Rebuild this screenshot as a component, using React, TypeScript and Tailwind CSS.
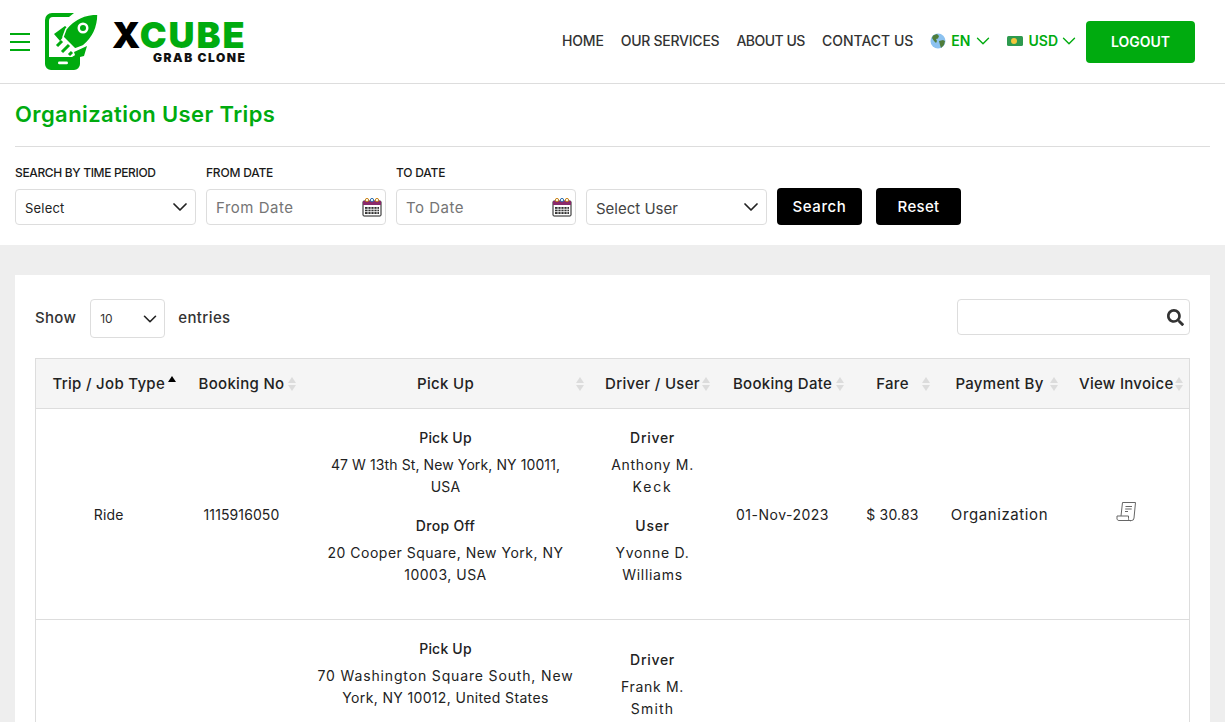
import { ChevronDown } from 'lucide-react';
import { FaSearch } from 'react-icons/fa';

const green = 'text-[#00ab0f]';

function Logo() {
  return (
    <svg width="54" height="57" viewBox="0 0 54 57" className="shrink-0">
      <path d="M7 0h22l-5 4H8a4 4 0 0 0-4 4v36h23l8-5v12a6 6 0 0 1-6 6H6a6 6 0 0 1-6-6V7a7 7 0 0 1 7-7z" fill="#00ab0f" />
      <rect x="13" y="48.500" width="10" height="2.800" rx="1.400" fill="#fff" />
      <path d="M9 21l11-8 4 3-9 12zM29 39l13-6-3 10-8 2z" fill="#00ab0f" />
      <path d="M53 1C39 1 29 6 21 16l-3 8 12 12 8-3C48 25 53 15 53 1z" fill="#00ab0f" stroke="#fff" strokeWidth="1.500" />
      <circle cx="38" cy="15" r="5.500" fill="#fff" />
      <circle cx="38" cy="15" r="3" fill="#00ab0f" />
      <path d="M12 33l5-5M17 39l7-7M24 42l3-3" stroke="#00ab0f" strokeWidth="3" />
    </svg>
  );
}

function Calendar() {
  return (
    <svg width="20" height="20" viewBox="0 0 20 20" className="shrink-0">
      <rect x="1" y="4" width="18" height="15" rx="1" fill="#fff" stroke="#1a1a1a" />
      <path d="M1 4h18v4H1z" fill="#8a2a6a" />
      <path d="M3 10h14v7H3z" fill="#333" />
      <path d="M3 12.300h14M3 14.600h14M6 10v7M9 10v7M12 10v7M15 10v7" stroke="#fff" strokeWidth="0.800" />
      <circle cx="5" cy="3" r="1.600" fill="#fff" stroke="#c8841a" />
      <circle cx="10" cy="3" r="1.600" fill="#fff" stroke="#2a6fb0" />
      <circle cx="15" cy="3" r="1.600" fill="#fff" stroke="#c8841a" />
    </svg>
  );
}

function Globe() {
  return (
    <svg width="16" height="16" viewBox="0 0 16 16" className="shrink-0">
      <circle cx="8" cy="8" r="7.500" fill="#8cc2f0" />
      <path d="M3 2.500l4-1.500 2 2-1 2.500-2 .5 1 2-1 2-2-2-2-3zM9 8l4-1 2 1-1 4-3 3-1-3z" fill="#4f7d3a" />
    </svg>
  );
}

function Money() {
  return (
    <svg width="16" height="10" viewBox="0 0 16 10" className="shrink-0">
      <rect width="16" height="10" rx="1.500" fill="#2e9a4f" />
      <circle cx="7" cy="5" r="3" fill="#f3c63c" />
    </svg>
  );
}

function Invoice() {
  return (
    <svg width="21" height="21" viewBox="0 0 21 21" fill="none" stroke="#666" strokeWidth="1">
      <path d="M5 15L6.500 1.500h13L18 17a2.500 2.500 0 0 1-2.500 2.500H3a2 2 0 0 1-2-2.500V15h11.500v2.500a2 2 0 0 0 3 2" />
      <path d="M9.500 5.500h6.500M9.200 8h6.500M9 10.500h3" />
    </svg>
  );
}

function Sort({ active }: { active?: boolean }) {
  return (
    <span className="absolute right-[6px] top-1/2 flex -translate-y-1/2 flex-col gap-[2px]">
      <span className={`h-0 w-0 border-x-[4px] border-b-[6px] border-x-transparent ${active ? 'border-b-black' : 'border-b-[#dcdcdc]'}`} />
      {!active && <span className="h-0 w-0 border-x-[4px] border-t-[6px] border-x-transparent border-t-[#dcdcdc]" />}
      {active && <span className="h-[8px]" />}
    </span>
  );
}

function SelectBox({ label, className, textClass }: { label: string; className: string; textClass: string }) {
  return (
    <div className={`flex h-9 items-center justify-between rounded border border-[#dddddd] bg-white pl-[9px] pr-[3px] ${className}`}>
      <span className={textClass}>{label}</span>
      <ChevronDown size={24} color="#222" strokeWidth={1.750} />
    </div>
  );
}

function DateBox({ label, placeholder }: { label: string; placeholder: string }) {
  return (
    <div className="w-[180px]">
      <div className="mb-[7px] text-xs font-medium leading-[18px] tracking-[-0.2px] text-[#1a1a1a]">{label}</div>
      <div className="flex h-9 items-center justify-between rounded border border-[#dddddd] pl-[9px] pr-[3px] text-[15px] tracking-[0.5px] text-[#757575]">
        <span className="pt-[2px]">{placeholder}</span>
        <Calendar />
      </div>
    </div>
  );
}

const headers = ['Trip / Job Type', 'Booking No', 'Pick Up', 'Driver / User', 'Booking Date', 'Fare', 'Payment By', 'View Invoice'];
const widths = ['w-[146px]', 'w-[120px]', 'w-[288px]', 'w-[126px]', 'w-[134px]', 'w-[86px]', 'w-[128px]', 'w-[126px]'];

export default function App() {
  return (
    <div className="h-screen overflow-hidden bg-white font-['Inter','Liberation_Sans',sans-serif] text-[#222]">
      <header className="flex h-[84px] items-center border-b border-[#dddddd] bg-white pl-[10px] pr-[30px]">
        <div className="mr-[15px] flex w-5 flex-col gap-[6px]">
          <span className="h-[2px] bg-[#00ab0f]" />
          <span className="h-[2px] bg-[#00ab0f]" />
          <span className="h-[2px] bg-[#00ab0f]" />
        </div>
        <Logo />
        <div className="ml-[13px] flex flex-col items-end font-black">
          <div className="text-[36px] leading-[32px] tracking-[1.900px]">
            <span className="text-black">X</span>
            <span className={green}>CUBE</span>
          </div>
          <div className="text-xs leading-[13px] tracking-[1.500px] text-[#111]">GRAB CLONE</div>
        </div>
        <nav className="ml-auto flex items-center text-sm font-medium text-[#333]">
          <span className="mb-[2px] mr-[17px] tracking-[-0.2px]">HOME</span>
          <span className="mb-[2px] mr-[17px] tracking-[-0.25px]">OUR SERVICES</span>
          <span className="mb-[2px] mr-[17px] tracking-[-0.5px]">ABOUT US</span>
          <span className="mb-[2px] mr-[17px]">CONTACT US</span>
          <span className={`mb-[2px] mr-[13px] flex items-center font-semibold ${green}`}>
            <Globe />
            <span className="ml-[5px] mr-[2px]">EN</span>
            <ChevronDown size={22} strokeWidth={1.500} />
          </span>
          <span className={`mb-[2px] mr-[6px] flex items-center font-semibold ${green}`}>
            <Money />
            <span className="ml-[5px]">USD</span>
            <ChevronDown size={22} strokeWidth={1.500} />
          </span>
          <button className="h-[42px] w-[109px] rounded bg-[#00ab0f] font-semibold text-white">LOGOUT</button>
        </nav>
      </header>

      <section className="bg-white px-[15px] pb-5">
        <h1 className={`flex h-[63px] items-center border-b border-[#dddddd] pb-[2px] text-[22px] font-semibold tracking-[0.400px] ${green}`}>
          Organization User Trips
        </h1>
        <div className="mt-[17px] flex items-end gap-[10px] text-[13px]">
          <div className="w-[181px]">
            <div className="mb-[7px] text-xs font-medium leading-[18px] tracking-[-0.35px] text-[#1a1a1a]">SEARCH BY TIME PERIOD</div>
            <SelectBox label="Select" className="" textClass="pt-[3px] tracking-[0.2px]" />
          </div>
          <DateBox label="FROM DATE" placeholder="From Date" />
          <DateBox label="TO DATE" placeholder="To Date" />
          <SelectBox label="Select User" className="w-[181px] text-[15px] text-[#444]" textClass="pt-[5px]" />
          <button className="h-[37px] w-[85px] rounded bg-black pt-px text-[15px] font-medium tracking-[0.600px] text-white">Search</button>
          <button className="ml-1 h-[37px] w-[85px] rounded bg-black pt-px text-[15px] font-medium tracking-[0.300px] text-white">Reset</button>
        </div>
      </section>

      <main className="h-full bg-[#eeeeee] px-[15px] pt-[30px]">
        <div className="bg-white px-5 pt-6">
          <div className="flex items-start justify-between">
            <div className="flex items-center text-[15px] font-medium text-[#333]">
              <span className="tracking-[0.300px]">Show</span>
              <div className="ml-[14px] mr-[13px] flex h-[39px] w-[75px] items-center justify-between rounded border border-[#dddddd] pl-[9px] pr-[3px] text-xs font-normal">
                10
                <ChevronDown size={22} color="#222" strokeWidth={1.750} />
              </div>
              <span className="tracking-[0.400px]">entries</span>
            </div>
            <div className="flex h-9 w-[233px] items-center justify-end rounded border border-[#dddddd] pr-[5px]">
              <FaSearch size={17} color="#333" />
            </div>
          </div>

          <table className="mt-5 w-[1155px] table-fixed border-collapse border border-[#dddddd] text-center text-sm text-[#222]">
            <thead>
              <tr className="h-[50px] border-b border-[#dddddd] bg-[#f5f5f5] text-[15px] tracking-[0.300px]">
                {headers.map((h, i) => (
                  <th key={h} className={`relative font-medium ${widths[i]}`}>
                    {h}
                    <Sort active={i === 0} />
                  </th>
                ))}
              </tr>
            </thead>
            <tbody className="leading-[22px]">
              <tr className="h-[211px] border-b border-[#dddddd]">
                <td className="pt-[2px] tracking-[0.200px]">Ride</td>
                <td className="pt-[2px] tracking-[0.100px]">1115916050</td>
                <td className="pb-4 tracking-[0.100px]">
                  <div className="mb-[5px] font-medium tracking-[0.200px]">Pick Up</div>
                  <div>47 W 13th St, New York, NY 10011,<br />USA</div>
                  <div className="mb-[5px] mt-[17px] font-medium tracking-[0.300px]">Drop Off</div>
                  <div className="tracking-[0.500px]">20 Cooper Square, New York, NY<br />10003, USA</div>
                </td>
                <td className="pb-4 tracking-[0.700px]">
                  <div className="mb-[5px] font-medium">Driver</div>
                  <div>Anthony M.<br /><span className="tracking-[1.800px]">Keck</span></div>
                  <div className="mb-[5px] mt-[17px] font-medium">User</div>
                  <div>Yvonne D.<br />Williams</div>
                </td>
                <td className="pt-[2px] tracking-[0.500px]">01-Nov-2023</td>
                <td className="pt-[2px] tracking-[0.200px]">$ 30.83</td>
                <td className="pt-[2px] text-[15px] tracking-[0.600px]">Organization</td>
                <td>
                  <div className="flex justify-center pb-[6px]"><Invoice /></div>
                </td>
              </tr>
              <tr className="h-[211px] align-top">
                <td />
                <td />
                <td className="pt-[18px]">
                  <div className="mb-[5px] font-medium tracking-[0.200px]">Pick Up</div>
                  <div className="tracking-[0.850px]">70 Washington Square South, New</div>
                  <div className="tracking-[0.350px]">York, NY 10012, United States</div>
                </td>
                <td className="pt-[29px] tracking-[0.700px]">
                  <div className="mb-[5px] font-medium">Driver</div>
                  <div>Frank M.<br /><span className="tracking-[1.200px]">Smith</span></div>
                </td>
                <td />
                <td />
                <td />
                <td />
              </tr>
            </tbody>
          </table>
        </div>
      </main>
    </div>
  );
}
